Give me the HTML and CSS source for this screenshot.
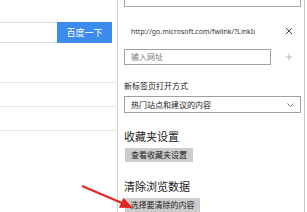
FILE: index.html
```html
<!DOCTYPE html>
<html lang="zh-CN">
<head>
<meta charset="utf-8">
<title>设置</title>
<link rel="stylesheet" href="styles.css">
</head>
<body>
<div class="screen">
  <div class="page">
    <div class="search">
      <div class="search-input"></div>
      <div class="search-btn">百度一下</div>
    </div>
    <div class="list">
      <div class="list-row"></div>
      <div class="list-row"></div>
      <div class="list-row"></div>
    </div>
  </div>
  <div class="panel">
    <div class="top-box"><span>特定页</span></div>
    <div class="url-row">
      <span class="url-text">http://go.microsoft.com/fwlink/?LinkId=69157</span>
      <svg class="icon" width="8" height="8" viewBox="0 0 8 8"><path d="M1 1L7 7M7 1L1 7" stroke="#444" stroke-width="1" fill="none"/></svg>
    </div>
    <div class="input-row">
      <div class="url-input">输入网址</div>
      <svg class="icon" width="8" height="8" viewBox="0 0 8 8"><path d="M4 0.5V7.5M0.5 4H7.5" stroke="#bbb" stroke-width="1" fill="none"/></svg>
    </div>
    <div class="label">新标签页打开方式</div>
    <div class="select">
      <span>热门站点和建议的内容</span>
      <svg class="chev" width="7" height="4" viewBox="0 0 7 4"><path d="M0.5 0.5L3.5 3.5L6.5 0.5" stroke="#777" stroke-width="1" fill="none"/></svg>
    </div>
    <div class="heading h1">收藏夹设置</div>
    <div class="btn b1">查看收藏夹设置</div>
    <div class="heading h2">清除浏览数据</div>
    <div class="btn b2">选择要清除的内容</div>
  </div>
  <div class="scrollbar"></div>
  <svg class="arrow" width="307" height="212" viewBox="0 0 307 212">
    <line x1="82" y1="186" x2="122" y2="203" stroke="#e2261f" stroke-width="2"/>
    <polygon points="133,208 123.4,197.8 119,207.8" fill="#e2261f"/>
  </svg>
</div>
</body>
</html>
```
FILE: styles.css
```css
html, body {
  margin: 0;
  padding: 0;
  background: #fff;
}
body {
  width: 307px;
  height: 212px;
  overflow: hidden;
  font-family: "Noto Sans", "Noto Sans CJK SC", sans-serif;
  font-size: 8px;
  color: #222;
}
.screen {
  position: relative;
  display: flex;
  width: 307px;
  height: 212px;
  overflow: hidden;
}
.page {
  width: 117px;
  flex: none;
  border-right: 1px solid #dedede;
}
.search {
  display: flex;
  margin-top: 22px;
  margin-right: 5px;
  height: 21px;
}
.search-input {
  flex: 1;
  margin-left: -1px;
  border: 1px solid #dcdcdc;
  border-right: none;
}
.search-btn {
  width: 55px;
  background: #3b8bec;
  color: #fff;
  font-size: 9px;
  display: flex;
  align-items: center;
  justify-content: center;
}
.list {
  margin-top: 39px;
}
.list-row {
  height: 23px;
  border-top: 1px solid #e8e8e8;
}
.panel {
  width: 177px;
  flex: none;
  padding-left: 6px;
  padding-right: 1px;
  display: flex;
  flex-direction: column;
  box-shadow: -1px 0 2px rgba(0,0,0,0.07);
}
.top-box {
  margin-top: -13px;
  height: 20px;
  box-sizing: border-box;
  border: 1px solid #a8a8a8;
  padding-left: 6px;
  line-height: 14px;
  overflow: hidden;
  color: #333;
}
.url-row {
  margin-top: 15px;
  height: 20px;
  display: flex;
  align-items: center;
  justify-content: space-between;
}
.url-text {
  width: 124px;
  padding-left: 7px;
  overflow: hidden;
  white-space: nowrap;
  color: #333;
  font-size: 7px;
}
.icon {
  margin-right: 8px;
  display: block;
}
.input-row {
  margin-top: 8px;
  height: 16px;
  display: flex;
  align-items: center;
  justify-content: space-between;
}
.url-input {
  width: 147px;
  height: 16px;
  box-sizing: border-box;
  border: 1px solid #a0a0a0;
  padding-left: 6px;
  line-height: 14px;
  color: #777;
}
.label {
  margin-top: 15px;
  line-height: 12px;
  color: #222;
}
.select {
  margin-top: 4px;
  height: 17px;
  box-sizing: border-box;
  border: 1px solid #a0a0a0;
  padding: 0 6px;
  display: flex;
  align-items: center;
  justify-content: space-between;
  color: #222;
}
.chev {
  display: block;
}
.heading {
  font-size: 11px;
  line-height: 14px;
  color: #222;
}
.h1 {
  margin-top: 17px;
}
.h2 {
  margin-top: 18px;
}
.btn {
  align-self: flex-start;
  margin-top: 4px;
  margin-left: 1px;
  height: 14px;
  line-height: 14px;
  background: #cccccc;
  color: #222;
  padding: 0 4px;
  box-sizing: border-box;
  text-align: center;
}
.b1 {
  width: 68px;
}
.b2 {
  width: 75px;
}
.scrollbar {
  flex: 1;
  position: relative;
}
.scrollbar::after {
  content: "";
  position: absolute;
  left: 2px;
  top: 0;
  bottom: 0;
  width: 1px;
  background: #c8c8c8;
}
.arrow {
  position: absolute;
  left: 0;
  top: 0;
  pointer-events: none;
}
```
